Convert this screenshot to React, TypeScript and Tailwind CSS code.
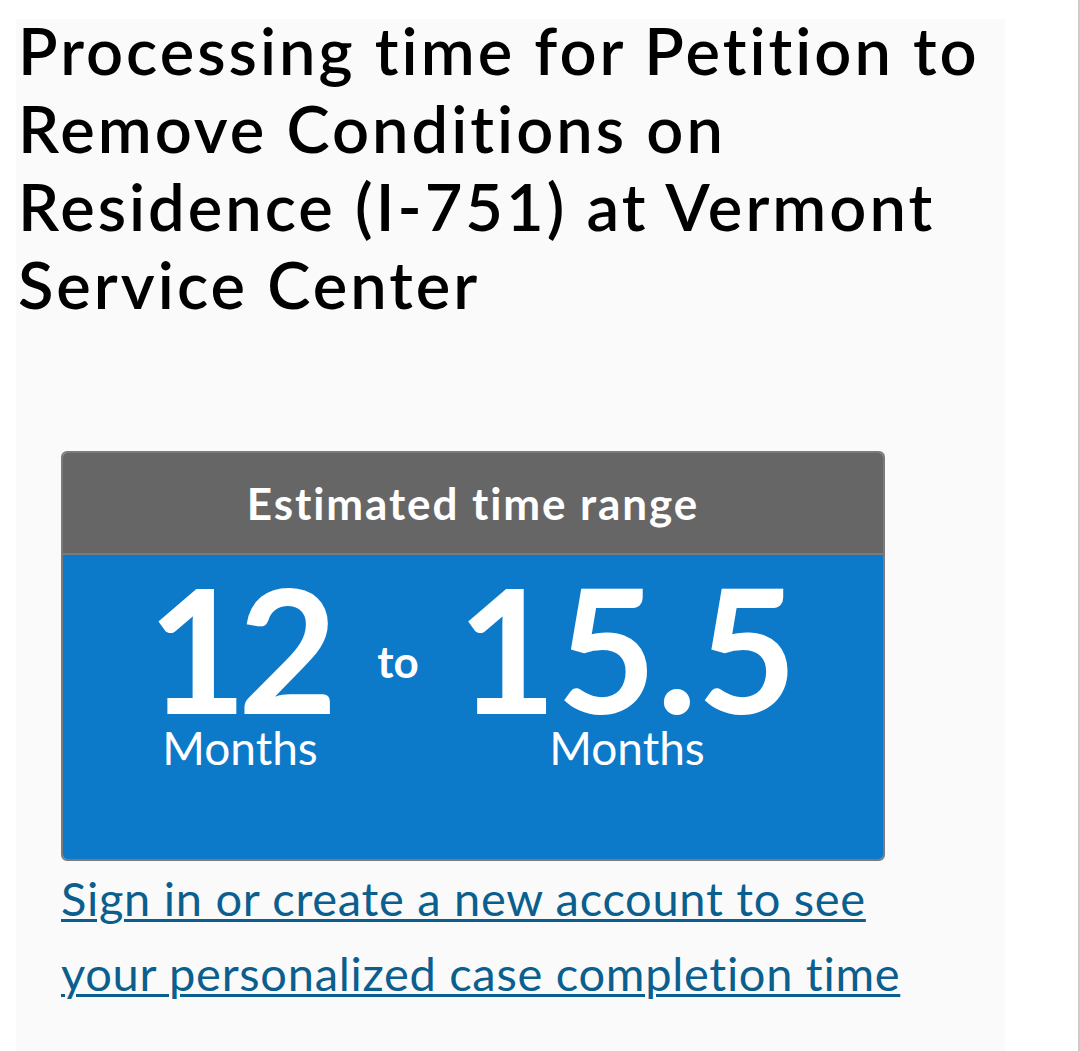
export default function App() {
  return (
    <div className="w-[1080px] h-[1051px] bg-white border-r-2 border-[#cccccc] overflow-hidden" style={{ fontFamily: 'Lato, "Open Sans", sans-serif' }}>
      <div className="flow-root ml-[16px] mt-[19px] w-[989px] h-[1032px] bg-[#fafafa]">
        {/* Heading */}
        <h1 className="-mt-[8px] pl-[2px] pr-[10px] text-[65px] leading-[78px] font-semibold text-black tracking-[3px]">
          Processing time for Petition to Remove Conditions on Residence (I-751) at Vermont Service Center
        </h1>

        {/* Time range card */}
        <div className="ml-[45px] mt-[128px] w-[824px] h-[410px] border-2 border-[#7b7b7b] rounded-md overflow-hidden flex flex-col">
          <div className="h-[102px] bg-[#666666] border-b-2 border-[#7b7b7b] flex items-center justify-center">
            <span className="text-white text-[44px] font-bold tracking-[1.9px]">Estimated time range</span>
          </div>
          <div className="flex-1 bg-[#0d79c9] flex items-start pt-[11px] pl-[57px]">
            <div className="flex flex-col items-center w-[240px]">
              <span className="text-white text-[172px] leading-[163px] font-bold tracking-[-9px] -ml-[4px]">12</span>
              <span className="text-white text-[46px] leading-[38px]">Months</span>
            </div>
            <div className="w-[76px] flex justify-center mt-[73px]">
              <span className="text-white text-[44px] leading-[44px] font-bold">to</span>
            </div>
            <div className="flex flex-col items-center w-[382px]">
              <span className="text-white text-[172px] leading-[163px] font-bold">15.5</span>
              <span className="text-white text-[46px] leading-[38px]">Months</span>
            </div>
          </div>
        </div>

        {/* Sign in link */}
        <a href="#" className="block ml-[45px] w-[850px] text-[47px] leading-[75px] tracking-[0.7px] text-[#0b5f8e] underline underline-offset-[3px] decoration-[3px]">
          Sign in or create a new account to see your personalized case completion time
        </a>
      </div>
    </div>
  );
}
